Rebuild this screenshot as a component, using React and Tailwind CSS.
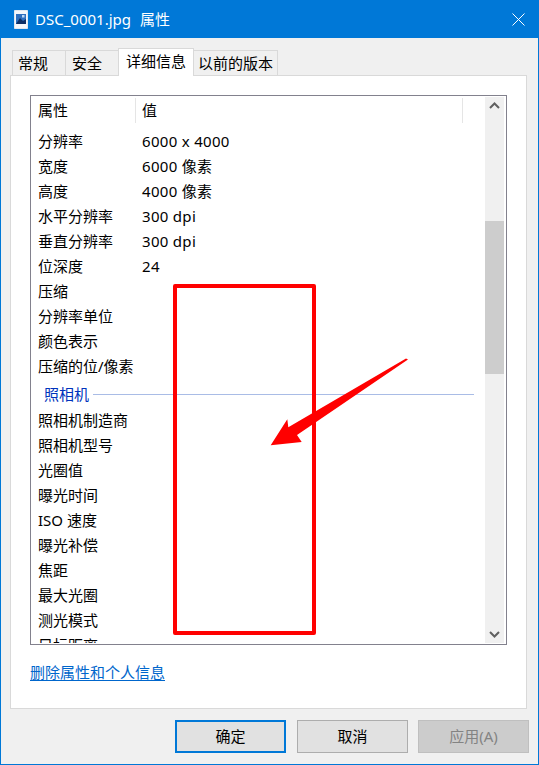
import React from "react";

const rowsA = [
  ["分辨率", "6000 x 4000"], ["宽度", "6000 像素"], ["高度", "4000 像素"], ["水平分辨率", "300 dpi"],
  ["垂直分辨率", "300 dpi"], ["位深度", "24"], ["压缩", ""], ["分辨率单位", ""], ["颜色表示", ""], ["压缩的位/像素", ""],
];
const rowsB = ["照相机制造商", "照相机型号", "光圈值", "曝光时间", "ISO 速度", "曝光补偿", "焦距", "最大光圈", "测光模式", "目标距离"];

function Row({ a, b }) {
  return (
    <div className="flex h-[25px] shrink-0 items-center leading-none">
      <div className="w-[104px] pl-[7px] whitespace-nowrap">{a}</div>
      <div className="pl-[7px] tracking-[0.3px] whitespace-nowrap">{b}</div>
    </div>
  );
}

function Btn({ children, cls }) {
  return <div className={"flex h-[33px] items-center justify-center " + cls}>{children}</div>;
}

export default function App() {
  return (
    <div className="relative flex h-[765px] w-[539px] flex-col overflow-hidden border border-[#0078d7] bg-[#f0f0f0] font-['Noto_Sans','Noto_Sans_CJK_SC',sans-serif] text-[15px] text-black">
      <div className="flex h-[37px] shrink-0 items-center bg-[#0078d7] px-[13px] text-white">
        <svg width="14" height="19" viewBox="0 0 14 19" className="shrink-0">
          <path d="M0.5 0.5H13.5V18.5H0.5Z" fill="#f4f7fb" stroke="#dfe6ef" />
          <rect x="2" y="4" width="10" height="10" fill="#2f6fbe" />
          <path d="M2 14 L6 8 L9 11 L12 9 V14Z" fill="#0d2f66" />
          <rect x="8" y="5" width="2.5" height="2.5" fill="#bcd8f6" />
        </svg>
        <div className="ml-[7px] flex gap-[9px] whitespace-nowrap text-[15px] leading-none">
          <span>DSC_0001.jpg</span>
          <span>属性</span>
        </div>
        <svg width="13" height="13" viewBox="0 0 13 13" className="ml-auto shrink-0" stroke="white" strokeWidth="1" fill="none">
          <path d="M0.5 0.5 L12.5 12.5 M12.5 0.5 L0.5 12.5" />
        </svg>
      </div>

      <div className="flex h-[37px] shrink-0 items-end pl-[11px] pt-[11px] leading-none">
        <div className="mb-[-1px] flex h-[26px] w-[53px] items-center border border-r-0 border-[#d9d9d9] bg-[#f0f0f0] pl-[5px] pt-[1px]">常规</div>
        <div className="mb-[-1px] flex h-[26px] w-[53px] items-center border border-r-0 border-[#d9d9d9] bg-[#f0f0f0] pl-[6px] pt-[1px]">安全</div>
        <div className="relative z-10 mb-[-1px] flex h-[28px] w-[76px] items-center justify-center border border-b-0 border-[#d9d9d9] bg-white pb-[3px]">详细信息</div>
        <div className="mb-[-1px] flex h-[26px] w-[84px] items-center justify-center border border-l-0 border-[#d9d9d9] bg-[#f0f0f0] pt-[1px] whitespace-nowrap">以前的版本</div>
      </div>

      <div className="ml-[9px] flex h-[634px] w-[517px] shrink-0 flex-col border border-[#d9d9d9] bg-white px-[19px] pt-[19px]">
        <div className="relative flex h-[550px] shrink-0 overflow-hidden border border-[#82818d] bg-white pt-px pb-px">
          <div className="flex min-w-0 flex-1 flex-col overflow-hidden">
            <div className="flex h-[27px] shrink-0 items-center leading-none">
              <div className="flex h-[25px] w-[105px] items-center border-r border-[#e5e5e5] pl-[7px]">属性</div>
              <div className="flex h-[25px] w-[327px] items-center border-r border-[#e5e5e5] pl-[6px]">值</div>
            </div>
            <div className="h-[5px] shrink-0" />
            {rowsA.map((r) => <Row key={r[0]} a={r[0]} b={r[1]} />)}
            <div className="flex h-[29px] shrink-0 items-center pl-[13px] pt-[2px] leading-none text-[#0033bc]">
              <span>照相机</span>
              <span className="ml-[4px] mr-[11px] h-px flex-1 bg-[#a9bce6]" />
            </div>
            {rowsB.map((r) => <Row key={r} a={r} b="" />)}
          </div>
          <div className="mr-[2px] flex w-[19px] shrink-0 flex-col bg-[#f0f0f0]">
            <div className="flex h-[17px] shrink-0 items-center justify-center">
              <svg width="11" height="7" viewBox="0 0 11 7" fill="none" stroke="#606060" strokeWidth="2"><path d="M1 6 L5.5 1.5 L10 6" /></svg>
            </div>
            <div className="h-[107px] shrink-0" />
            <div className="h-[153px] shrink-0 bg-[#cdcdcd]" />
            <div className="flex-1" />
            <div className="flex h-[17px] shrink-0 items-center justify-center">
              <svg width="11" height="7" viewBox="0 0 11 7" fill="none" stroke="#606060" strokeWidth="2"><path d="M1 1 L5.5 5.5 L10 1" /></svg>
            </div>
          </div>
        </div>
        <div className="mt-[20px] leading-none text-[#0066cc] underline underline-offset-2 whitespace-nowrap">删除属性和个人信息</div>
      </div>

      <div className="flex flex-1 items-start justify-end pr-[9px] pt-[11px]">
        <Btn cls="mr-[11px] w-[111px] border-2 border-[#0078d7] bg-[#e1e1e1]">确定</Btn>
        <Btn cls="mr-[10px] w-[111px] border border-[#adadad] bg-[#e1e1e1]">取消</Btn>
        <Btn cls="w-[111px] border border-[#bfbfbf] bg-[#cccccc] text-[#838383]">应用(A)</Btn>
      </div>

      <div className="pointer-events-none absolute left-[172px] top-[283px] h-[351px] w-[143px] rounded-[2px] border-[4px] border-[#ff0000]" />
      <svg className="pointer-events-none absolute left-[259px] top-[349px]" width="155" height="110" viewBox="0 0 155 110">
        <path d="M148 9.5 L146 8.5 L28.3 77.3 L27.3 69.3 L10.7 95.3 L41.7 92 L37 85 Z" fill="#ff0000" />
      </svg>
    </div>
  );
}
